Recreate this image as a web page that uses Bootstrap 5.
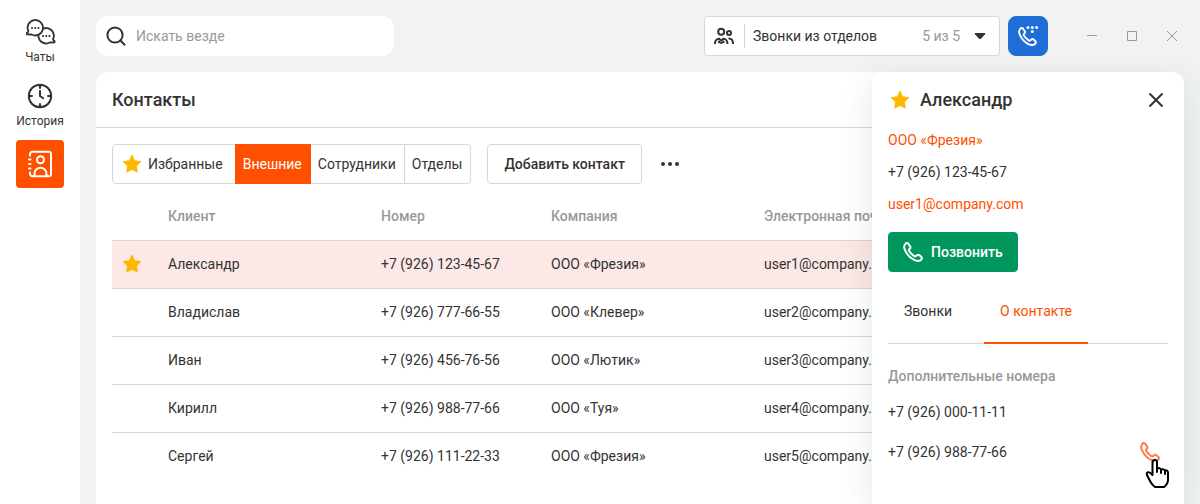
<!DOCTYPE html>
<html lang="ru">
<head>
<meta charset="utf-8">
<meta name="viewport" content="width=device-width, initial-scale=1">
<title>Контакты</title>
<link href="https://cdn.jsdelivr.net/npm/bootstrap@5.3.0/dist/css/bootstrap.min.css" rel="stylesheet">
<style>
:root { --ink: #333; --muted-ink: #999; --line: #d6d8d8; --accent: #ff4f00; }
body { font-family: Roboto, "Liberation Sans", sans-serif; font-size: 14px; line-height: 20px; color: var(--ink); background: #f1f3f3; }
a { color: var(--accent); text-decoration: none; }
svg { display: block; flex: none; }
.btn { --bs-btn-font-size: 14px; --bs-btn-line-height: 20px; --bs-btn-color: var(--ink); --bs-btn-border-color: var(--line); --bs-btn-border-radius: 4px; --bs-btn-bg: #fff; height: 40px; }
.fw-medium-ink { font-weight: 500; }
.muted-ink { color: var(--muted-ink); }
.side-nav { width: 80px; flex: none; gap: 12px; }
.side-link { color: var(--ink); font-size: 12px; line-height: 18px; min-width: 48px; height: 48px; }
.side-link.current { background: var(--accent); color: #fff; border-radius: 4px; width: 48px; }
.search-box { width: 298px; height: 40px; border-radius: 12px; }
.search-box input { font-size: 14px; line-height: 20px; }
.search-box input::placeholder { color: var(--muted-ink); }
.departments { width: 296px; --bs-btn-padding-x: 7px; }
.departments .divider { width: 1px; height: 24px; background: var(--line); }
.dial { --bs-btn-bg: #1f6dd6; --bs-btn-border-color: #1f6dd6; --bs-btn-border-radius: 8px; --bs-btn-color: #fff; width: 40px; }
.plain { background: none; border: 0; padding: 0; color: inherit; }
.sheet { border-radius: 12px 12px 0 0; }
.sheet-head { height: 56px; border-bottom: 1px solid var(--line); }
h1, h2 { font-size: 18px; line-height: 24px; font-weight: 500; margin: 0; }
.filters .btn { padding-left: 7px; padding-right: 8px; --bs-btn-active-bg: var(--accent); --bs-btn-active-border-color: var(--accent); --bs-btn-active-color: #fff; }
.filters .btn:first-child { padding-right: 12px; }
.contacts { table-layout: fixed; --bs-table-bg: transparent; color: var(--ink); border-color: var(--line); }
.contacts > :not(caption) > * > * { padding: 0; height: 48px; color: var(--ink); white-space: nowrap; vertical-align: middle; }
.contacts > thead > tr > th { font-weight: 500; color: var(--muted-ink); }
.contacts tbody tr:last-child td { border-bottom: 0; }
.contacts .picked td { background: #fce8e6; }
.c-star { width: 56px; } .c-name, .c-company { width: 213px; } .c-phone { width: 170px; }
.details { width: 312px; border-radius: 12px 12px 0 0; box-shadow: 0 8px 32px rgba(40, 60, 60, .12); }
.details-head { padding: 16px 0 18px; }
.details-info { gap: 12px; margin-bottom: 18px; }
.call { --bs-btn-bg: #00965e; --bs-btn-border-color: #00965e; --bs-btn-color: #fff; --bs-btn-padding-x: 14px; }
.detail-tabs { border-bottom: 1px solid var(--line); margin-bottom: 22px; }
.detail-tabs button { color: var(--ink); background: none; border: 0; border-bottom: 2px solid transparent; padding: 0 16px; height: 64px; margin-bottom: -1px; }
.detail-tabs button.current { color: var(--accent); border-bottom-color: var(--accent); }
.quick-call { color: #ff7a45; }
.hand { left: 3px; top: 16px; }
</style>
</head>
<body>
<svg width="0" height="0" class="position-absolute" aria-hidden="true">
  <symbol id="star" viewBox="0 0 20 20"><path d="M10 1.800 12.400 7l5.800.7-4.200 4 1 5.800-5-2.400-5 2.400 1-5.800-4.200-4L7.600 7Z" fill="#ffb800" stroke="#ffb800" stroke-width="1.600" stroke-linejoin="round"/></symbol>
  <symbol id="phone" viewBox="0 0 20 20"><path d="M5.200 1.600C4.400.8 3.200 1 2.400 1.900 1 3.400.8 5.600 2 8.200c1.800 4 5.400 8.200 9.600 10 2.800 1.200 5.200 1 6.600-.6.9-1 .8-2 0-2.800l-1.800-1.600c-.8-.7-1.600-.7-2.400 0l-1.200 1c-.6.4-1.200.3-1.800-.2-2-1.600-3.600-3.200-4.800-5-.4-.7-.4-1.200.1-1.700L7 6.500c.6-.7.6-1.500 0-2.300Z" fill="none" stroke="currentColor" stroke-width="2" stroke-linejoin="round"/></symbol>
</svg>
<div class="d-flex vh-100 overflow-hidden">
  <nav class="side-nav bg-white d-flex flex-column align-items-center py-3" aria-label="Разделы">
    <a href="#" class="side-link d-flex flex-column align-items-center mb-1">
      <svg width="32" height="32" viewBox="0 0 32 32" fill="#fff" stroke="#333" stroke-width="1.800" stroke-linejoin="round" stroke-linecap="round"><path d="M29 23.200a7.700 7.700 0 1 0-3.200 3.300l4.700-.2v-1.500q-1.200-.3-1.500-1.600Z"/><path d="M4.400 15.200a7.700 7.700 0 1 1 3.200 3.300l-4.700-.2v-1.500q1.200-.3 1.500-1.600Z"/><path d="M8 12h.1M11.200 12h.1M14.400 12h.1M19 20h.1M22.200 20h.1M25.400 20h.1" stroke-width="2"/></svg>
      Чаты</a>
    <a href="#" class="side-link d-flex flex-column align-items-center">
      <svg width="32" height="32" viewBox="0 0 32 32" fill="none" stroke="#333" stroke-width="2" stroke-linecap="round"><circle cx="16" cy="16" r="11.200"/><path d="M16 5v3M16 24v3M5 16h3M24 16h3M16 11v5l3.200 2.200"/></svg>
      История</a>
    <a href="#" class="side-link current d-flex align-items-center justify-content-center" aria-label="Контакты">
      <svg width="32" height="32" viewBox="0 0 32 32" fill="none" stroke="#fff" stroke-width="2" stroke-linecap="round"><path d="M6 7.500V6a2.200 2.200 0 0 1 2.200-2.200H25A2.200 2.200 0 0 1 27 6v20a2.200 2.200 0 0 1-2.200 2.200H8.200A2.200 2.200 0 0 1 6 26v-1.500M5 11.500h1.500M5 16h1.500M5 20.500h1.500"/><circle cx="16.500" cy="11.800" r="3.500"/><path d="M10.500 27.500v-1.800a6 6 0 0 1 12 0v1.800"/></svg></a>
  </nav>
  <main class="flex-grow-1 d-flex flex-column gap-3 p-3 pb-0">
    <header class="d-flex align-items-center">
      <label class="search-box bg-white d-flex align-items-center gap-2 px-2 me-auto">
        <svg width="24" height="24" viewBox="0 0 24 24" fill="none" stroke="#333" stroke-width="2" stroke-linecap="round"><circle cx="11" cy="11" r="7.600"/><path d="m16.500 16.500 4 4.200"/></svg>
        <input type="search" class="form-control border-0 p-0 shadow-none bg-transparent" placeholder="Искать везде" aria-label="Искать везде">
      </label>
      <button class="btn departments d-flex align-items-center me-2" type="button">
        <svg width="24" height="24" viewBox="0 0 24 24" fill="none" stroke="#333" stroke-width="2"><circle cx="9.200" cy="7.800" r="3"/><circle cx="17" cy="9" r="2"/><path d="M3 20v-1a4.300 4.300 0 0 1 4-4.300q2.200 3 4.400 0a4.300 4.300 0 0 1 4 4.300v1M6 17.500l3.200 1.500 3.200-1.500M16.500 14.500q4.500-.3 4.500 5.500"/></svg>
        <span class="divider mx-2"></span>
        <span class="me-auto">Звонки из отделов</span>
        <span class="muted-ink me-2">5 из 5</span>
        <svg width="24" height="24" viewBox="0 0 24 24"><path d="M7.500 9h9q1.200 0 .5 1.200L13.200 14.600q-1.200 1-2.400 0L7 10.200Q6.300 9 7.500 9Z" fill="#333"/></svg>
      </button>
      <button class="btn dial p-0 d-flex align-items-center justify-content-center" type="button" aria-label="Набрать номер">
        <svg width="24" height="24" viewBox="0 0 24 24"><use href="#phone" x="2" y="3" width="19" height="19"/><g fill="#fff"><circle cx="12" cy="3.500" r="1.500"/><circle cx="16.300" cy="3.500" r="1.500"/><circle cx="20.600" cy="3.500" r="1.500"/><circle cx="16.300" cy="7.500" r="1.500"/></g></svg>
      </button>
      <div class="muted-ink d-flex gap-3 ms-3 ps-3">
        <button class="plain" type="button" aria-label="Свернуть"><svg width="24" height="24" viewBox="0 0 24 24" fill="none" stroke="currentColor"><path d="M7 11.500h10"/></svg></button>
        <button class="plain" type="button" aria-label="Развернуть"><svg width="24" height="24" viewBox="0 0 24 24" fill="none" stroke="currentColor"><path d="M7.500 7.500h9v9h-9z"/></svg></button>
        <button class="plain" type="button" aria-label="Закрыть окно"><svg width="24" height="24" viewBox="0 0 24 24" fill="none" stroke="currentColor"><path d="m7 7 10 10M17 7 7 17"/></svg></button>
      </div>
    </header>
    <section class="sheet bg-white flex-grow-1 position-relative">
      <div class="sheet-head d-flex align-items-center px-3"><h1>Контакты</h1></div>
      <div class="d-flex align-items-center gap-3 px-3 pt-3 pb-2">
        <div class="btn-group filters" role="group" aria-label="Фильтр контактов">
          <button class="btn d-flex align-items-center" type="button"><svg class="me-1" width="24" height="24"><use href="#star" x="2" y="2" width="20" height="20"/></svg>Избранные</button>
          <button class="btn active" type="button">Внешние</button>
          <button class="btn" type="button">Сотрудники</button>
          <button class="btn" type="button">Отделы</button>
        </div>
        <button class="btn fw-medium-ink px-3" type="button">Добавить контакт</button>
        <button class="plain" type="button" aria-label="Ещё"><svg width="24" height="24" viewBox="0 0 24 24" fill="#333"><circle cx="5" cy="12" r="2"/><circle cx="12" cy="12" r="2"/><circle cx="19" cy="12" r="2"/></svg></button>
      </div>
      <div class="px-3">
        <table class="table contacts mb-0">
          <thead><tr><th class="c-star"></th><th class="c-name">Клиент</th><th class="c-phone">Номер</th><th class="c-company">Компания</th><th>Электронная почта</th></tr></thead>
          <tbody>
            <tr class="picked"><td><svg class="ms-2" width="24" height="24" role="img" aria-label="Избранный"><use href="#star" x="2" y="2" width="20" height="20"/></svg></td><td>Александр</td><td>+7 (926) 123-45-67</td><td>ООО «Фрезия»</td><td>user1@company.com</td></tr>
            <tr><td></td><td>Владислав</td><td>+7 (926) 777-66-55</td><td>ООО «Клевер»</td><td>user2@company.com</td></tr>
            <tr><td></td><td>Иван</td><td>+7 (926) 456-76-56</td><td>ООО «Лютик»</td><td>user3@company.com</td></tr>
            <tr><td></td><td>Кирилл</td><td>+7 (926) 988-77-66</td><td>ООО «Туя»</td><td>user4@company.com</td></tr>
            <tr><td></td><td>Сергей</td><td>+7 (926) 111-22-33</td><td>ООО «Фрезия»</td><td>user5@company.com</td></tr>
          </tbody>
        </table>
      </div>
      <aside class="details bg-white position-absolute top-0 end-0 h-100 px-3" aria-label="Карточка контакта">
        <div class="details-head d-flex align-items-center gap-2">
          <svg width="24" height="24"><use href="#star" x="2" y="2" width="20" height="20"/></svg>
          <h2 class="me-auto">Александр</h2>
          <button class="plain" type="button" aria-label="Закрыть"><svg width="24" height="24" viewBox="0 0 24 24" fill="none" stroke="#333" stroke-width="2" stroke-linecap="round"><path d="m6 6 12 12M18 6 6 18"/></svg></button>
        </div>
        <div class="details-info d-flex flex-column align-items-start">
          <a href="#">ООО «Фрезия»</a>
          <span>+7 (926) 123-45-67</span>
          <a href="#">user1@company.com</a>
        </div>
        <button class="btn call fw-medium-ink d-flex align-items-center gap-2" type="button"><svg width="20" height="20"><use href="#phone"/></svg>Позвонить</button>
        <div class="detail-tabs d-flex gap-3 mt-2" role="tablist">
          <button role="tab" type="button" aria-selected="false">Звонки</button>
          <button class="current" role="tab" type="button" aria-selected="true">О контакте</button>
        </div>
        <p class="muted-ink fw-medium-ink mb-3">Дополнительные номера</p>
        <div class="mb-3">+7 (926) 000-11-11</div>
        <div class="d-flex justify-content-between align-items-center pt-1">+7 (926) 988-77-66
          <button class="plain quick-call position-relative me-2" type="button" aria-label="Позвонить на +7 (926) 988-77-66"><svg width="20" height="20"><use href="#phone"/></svg>
            <svg class="hand position-absolute" width="28" height="32" viewBox="0 0 28 32"><path d="M9.500 17V4.500q0-2.500 2.300-2.500T14 4.500V11q0-1 1.500-1t2.500 1.500q2.500-1 4 .8 2.500-.5 3 2V22q0 4-4 7h-9q-3-2-5-6l-3-6q-.8-2 1-2.800 1.800-.4 4.500 2.800ZM14 10v4M18 11.500V15M22 12.500V16" fill="#fff" stroke="#000" stroke-width="2" stroke-linejoin="round" stroke-linecap="round"/></svg></button>
        </div>
      </aside>
    </section>
  </main>
</div>
<script src="https://cdn.jsdelivr.net/npm/bootstrap@5.3.0/dist/js/bootstrap.bundle.min.js"></script>
</body>
</html>
